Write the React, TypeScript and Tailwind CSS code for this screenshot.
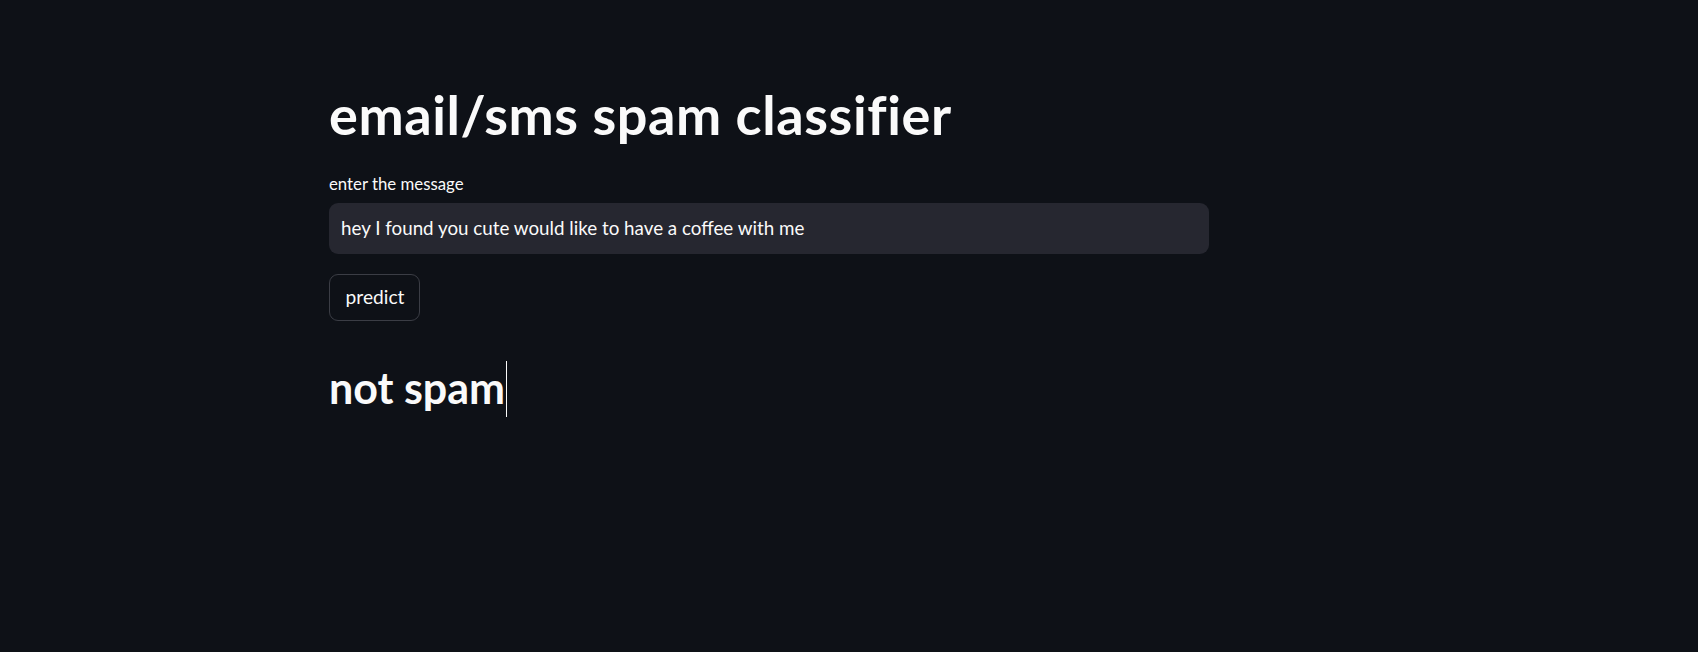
import * as React from 'react';

const App: React.FC = () => {
  const [message, setMessage] = React.useState('hey I found you cute would like to have a coffee with me');

  return (
    <div className="min-h-screen w-full bg-[#0e1117] text-[#fafafa] font-['Lato',_'Noto_Sans',_sans-serif]">
      <div className="pl-[329px] pt-[83px] w-[1209px]">
        {/* Title */}
        <h1 className="text-[54px] leading-[64px] font-bold tracking-[0.6px]">email/sms spam classifier</h1>

        {/* Text input */}
        <label className="block mt-[27px] text-[16.8px] leading-[20px]">enter the message</label>
        <div className="mt-[9px] h-[51px] w-[880px] rounded-[9px] bg-[#262730] flex items-center px-[12px]">
          <input
            value={message}
            onChange={(e) => setMessage(e.target.value)}
            className="w-full bg-transparent outline-none text-[18.8px] text-[#fafafa]"
          />
        </div>

        {/* Button */}
        <button className="mt-[20px] h-[47px] w-[91px] rounded-[9px] border border-[#3b3d45] bg-[#0e1117] text-[19.2px] flex items-center justify-center pl-px">
          predict
        </button>

        {/* Result */}
        <div className="mt-[39px] flex items-start">
          <h2 className="pt-[2px] text-[43px] leading-[52px] font-bold">not spam</h2>
          <span className="ml-[1px] mt-[1px] h-[56px] w-px bg-[#fafafa]" />
        </div>
      </div>
    </div>
  );
};

export default App;
